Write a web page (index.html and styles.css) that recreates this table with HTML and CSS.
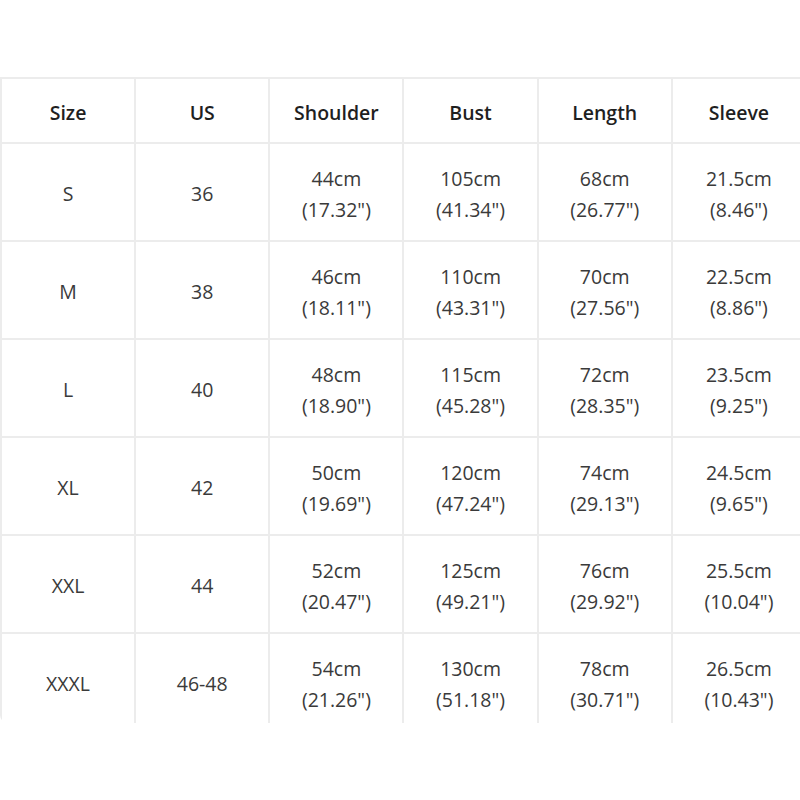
FILE: index.html
```html
<!DOCTYPE html>
<html>
<head>
<meta charset="utf-8">
<link rel="stylesheet" href="styles.css">
</head>
<body>
<div class="wrap">
<table class="size-table">
<colgroup><col><col><col><col><col><col></colgroup>
<thead>
<tr><th>Size</th><th>US</th><th>Shoulder</th><th>Bust</th><th>Length</th><th>Sleeve</th></tr>
</thead>
<tbody>
<tr><td>S</td><td>36</td><td>44cm<br>(17.32")</td><td>105cm<br>(41.34")</td><td>68cm<br>(26.77")</td><td>21.5cm<br>(8.46")</td></tr>
<tr><td>M</td><td>38</td><td>46cm<br>(18.11")</td><td>110cm<br>(43.31")</td><td>70cm<br>(27.56")</td><td>22.5cm<br>(8.86")</td></tr>
<tr><td>L</td><td>40</td><td>48cm<br>(18.90")</td><td>115cm<br>(45.28")</td><td>72cm<br>(28.35")</td><td>23.5cm<br>(9.25")</td></tr>
<tr><td>XL</td><td>42</td><td>50cm<br>(19.69")</td><td>120cm<br>(47.24")</td><td>74cm<br>(29.13")</td><td>24.5cm<br>(9.65")</td></tr>
<tr><td>XXL</td><td>44</td><td>52cm<br>(20.47")</td><td>125cm<br>(49.21")</td><td>76cm<br>(29.92")</td><td>25.5cm<br>(10.04")</td></tr>
<tr><td>XXXL</td><td>46-48</td><td>54cm<br>(21.26")</td><td>130cm<br>(51.18")</td><td>78cm<br>(30.71")</td><td>26.5cm<br>(10.43")</td></tr>
</tbody>
</table>
</div>
</body>
</html>
```

FILE: styles.css
```css
html, body {
  margin: 0;
  padding: 0;
  background: #ffffff;
}
.wrap {
  margin-top: 77px;
  width: 807px;
  height: 646px;
  overflow: hidden;
  border-bottom-left-radius: 8px;
}
.size-table {
  border-collapse: collapse;
  table-layout: fixed;
  width: 807px;
  font-family: "Open Sans", "Noto Sans", sans-serif;
  font-size: 19.5px;
  color: #3a3a3a;
}
.size-table th,
.size-table td {
  border: 2px solid #ececec;
  text-align: center;
  vertical-align: middle;
  padding: 0;
}
.size-table th {
  height: 60px;
  padding-top: 3px;
  font-weight: 600;
  color: #1f1f1f;
}
.size-table td {
  height: 93px;
  line-height: 31px;
  padding-top: 3px;
}
```
